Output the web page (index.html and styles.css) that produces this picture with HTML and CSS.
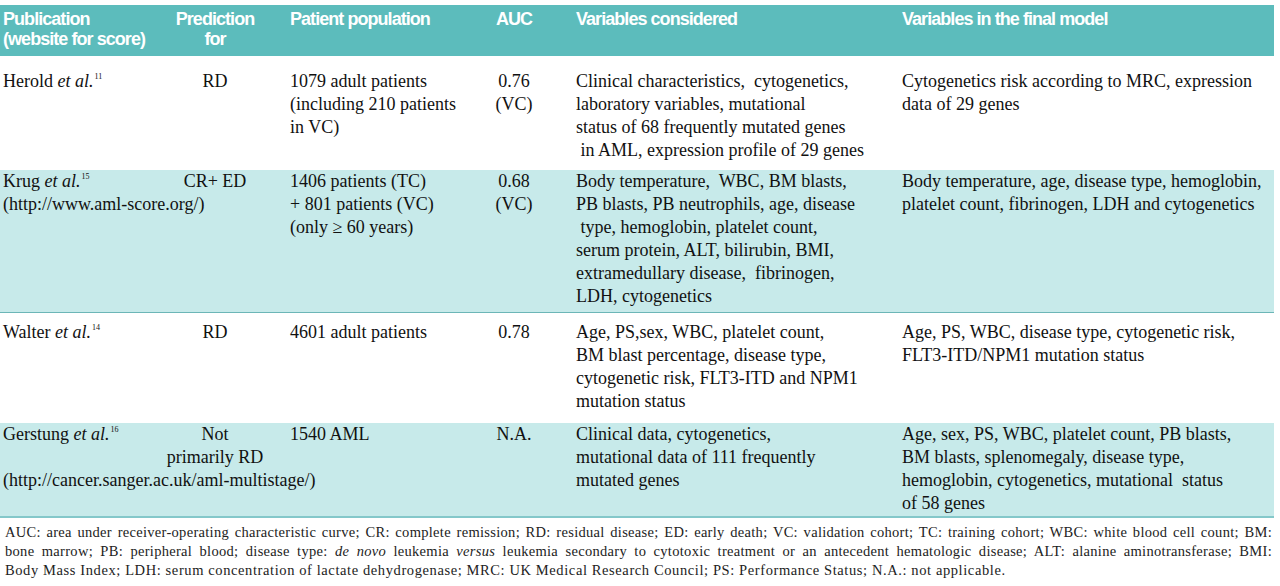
FILE: index.html
```html
<!DOCTYPE html>
<html lang="en">
<head>
<meta charset="utf-8">
<title>Prediction scores table</title>
<link rel="stylesheet" href="styles.css">
</head>
<body>
<div class="wrap">
<table class="tbl">
  <colgroup>
    <col class="w1"><col class="w2"><col class="w3"><col class="w4"><col class="w5"><col class="w6">
  </colgroup>
  <thead>
    <tr class="head">
      <th class="c1">Publication<br>(website for score)</th>
      <th class="c2">Prediction<br>for</th>
      <th class="c3">Patient population</th>
      <th class="c4">AUC</th>
      <th class="c5">Variables considered</th>
      <th class="c6">Variables in the final model</th>
    </tr>
  </thead>
  <tbody>
    <tr class="r1">
      <td class="c1">Herold <i>et al.</i><sup>11</sup></td>
      <td class="c2">RD</td>
      <td class="c3">1079 adult patients<br>(including 210 patients<br>in VC)</td>
      <td class="c4">0.76<br>(VC)</td>
      <td class="c5">Clinical characteristics,&nbsp; cytogenetics,<br>laboratory variables, mutational<br>status of 68 frequently mutated genes<br>&nbsp;in AML, expression profile of 29 genes</td>
      <td class="c6">Cytogenetics risk according to MRC, expression<br>data of 29 genes</td>
    </tr>
    <tr class="r2 shade">
      <td class="c1">Krug <i>et al.</i><sup>15</sup><br>(http://www.aml-score.org/)</td>
      <td class="c2">CR+ ED</td>
      <td class="c3">1406 patients (TC)<br>+ 801 patients (VC)<br>(only ≥ 60 years)</td>
      <td class="c4">0.68<br>(VC)</td>
      <td class="c5">Body temperature,&nbsp; WBC, BM blasts,<br>PB blasts, PB neutrophils, age, disease<br>&nbsp;type, hemoglobin, platelet count,<br>serum protein, ALT, bilirubin, BMI,<br>extramedullary disease,&nbsp; fibrinogen,<br>LDH, cytogenetics</td>
      <td class="c6">Body temperature, age, disease type, hemoglobin,<br>platelet count, fibrinogen, LDH and cytogenetics</td>
    </tr>
    <tr class="r3">
      <td class="c1">Walter <i>et al.</i><sup>14</sup></td>
      <td class="c2">RD</td>
      <td class="c3">4601 adult patients</td>
      <td class="c4">0.78</td>
      <td class="c5">Age, PS,sex, WBC, platelet count,<br>BM blast percentage, disease type,<br>cytogenetic risk, FLT3-ITD and NPM1<br>mutation status</td>
      <td class="c6">Age, PS, WBC, disease type, cytogenetic risk,<br>FLT3-ITD/NPM1 mutation status</td>
    </tr>
    <tr class="r4 shade">
      <td class="c1">Gerstung <i>et al.</i><sup>16</sup><br><br>(http://cancer.sanger.ac.uk/aml-multistage/)</td>
      <td class="c2">Not<br>primarily RD</td>
      <td class="c3">1540 AML</td>
      <td class="c4">N.A.</td>
      <td class="c5">Clinical data, cytogenetics,<br>mutational data of 111 frequently<br>mutated genes</td>
      <td class="c6">Age, sex, PS, WBC, platelet count, PB blasts,<br>BM blasts, splenomegaly, disease type,<br>hemoglobin, cytogenetics, mutational&nbsp; status<br>of 58 genes</td>
    </tr>
  </tbody>
</table>
<div class="notes">
  <p class="jl">AUC: area under receiver-operating characteristic curve; CR: complete remission; RD: residual disease; ED: early death; VC: validation cohort; TC: training cohort; WBC: white blood cell count; BM:</p>
  <p class="jl">bone marrow; PB: peripheral blood; disease type: <i>de novo</i> leukemia <i>versus</i> leukemia secondary to cytotoxic treatment or an antecedent hematologic disease; ALT: alanine aminotransferase; BMI:</p>
  <p class="last">Body Mass Index; LDH: serum concentration of lactate dehydrogenase; MRC: UK Medical Research Council; PS: Performance Status; N.A.: not applicable.</p>
</div>
</div>
</body>
</html>
```

FILE: styles.css
```css
html, body {
  margin: 0;
  padding: 0;
  background: #ffffff;
}

.wrap {
  width: 1274px;
  padding-top: 5px;
}

.tbl {
  width: 1274px;
  table-layout: fixed;
  border-collapse: collapse;
  border-spacing: 0;
  font-family: "Liberation Serif", "Times New Roman", serif;
  font-size: 18px;
  line-height: 23px;
  color: #111111;
}

.w1 { width: 165px; }
.w2 { width: 100px; }
.w3 { width: 203px; }
.w4 { width: 92px; }
.w5 { width: 326px; }
.w6 { width: 388px; }

.tbl th,
.tbl td {
  padding: 0;
  vertical-align: top;
  white-space: nowrap;
  overflow: visible;
  text-align: left;
}

.tbl .c1 { padding-left: 3px; }
.tbl .c2 { text-align: center; }
.tbl .c3 { padding-left: 25px; }
.tbl .c4 { text-align: center; }
.tbl .c5 { padding-left: 16px; }
.tbl .c6 { padding-left: 16px; }

.head {
  background: #5cbcbc;
  height: 51px;
}

.head th {
  font-family: "Liberation Sans", Arial, sans-serif;
  font-weight: bold;
  font-size: 18px;
  line-height: 20px;
  letter-spacing: -0.95px;
  color: #ffffff;
  padding-top: 4px;
}

.shade {
  background: #c7eaea;
}

.r1 { height: 114px; }
.r1 td { padding-top: 14px; }

.r2 { height: 142px; border-bottom: 1px solid #6cb6b7; }
.r2 td { padding-top: 0; }

.r3 { height: 111px; }
.r3 td { padding-top: 8px; }

.r4 { height: 94px; border-bottom: 2px solid #84c8ca; }
.r4 td { padding-top: 0; }

.tbl sup {
  font-size: 8px;
  line-height: 0;
  vertical-align: 8px;
  margin-left: 1px;
}

.notes {
  padding: 5px 2px 0 5px;
  font-family: "Liberation Serif", "Times New Roman", serif;
  font-size: 14.5px;
  line-height: 19px;
  letter-spacing: 0.3px;
  color: #222222;
}

.notes p {
  margin: 0;
  white-space: nowrap;
}

.notes .jl {
  white-space: normal;
  text-align: justify;
  text-align-last: justify;
}

.notes .last {
  letter-spacing: 0.6px;
}
```
